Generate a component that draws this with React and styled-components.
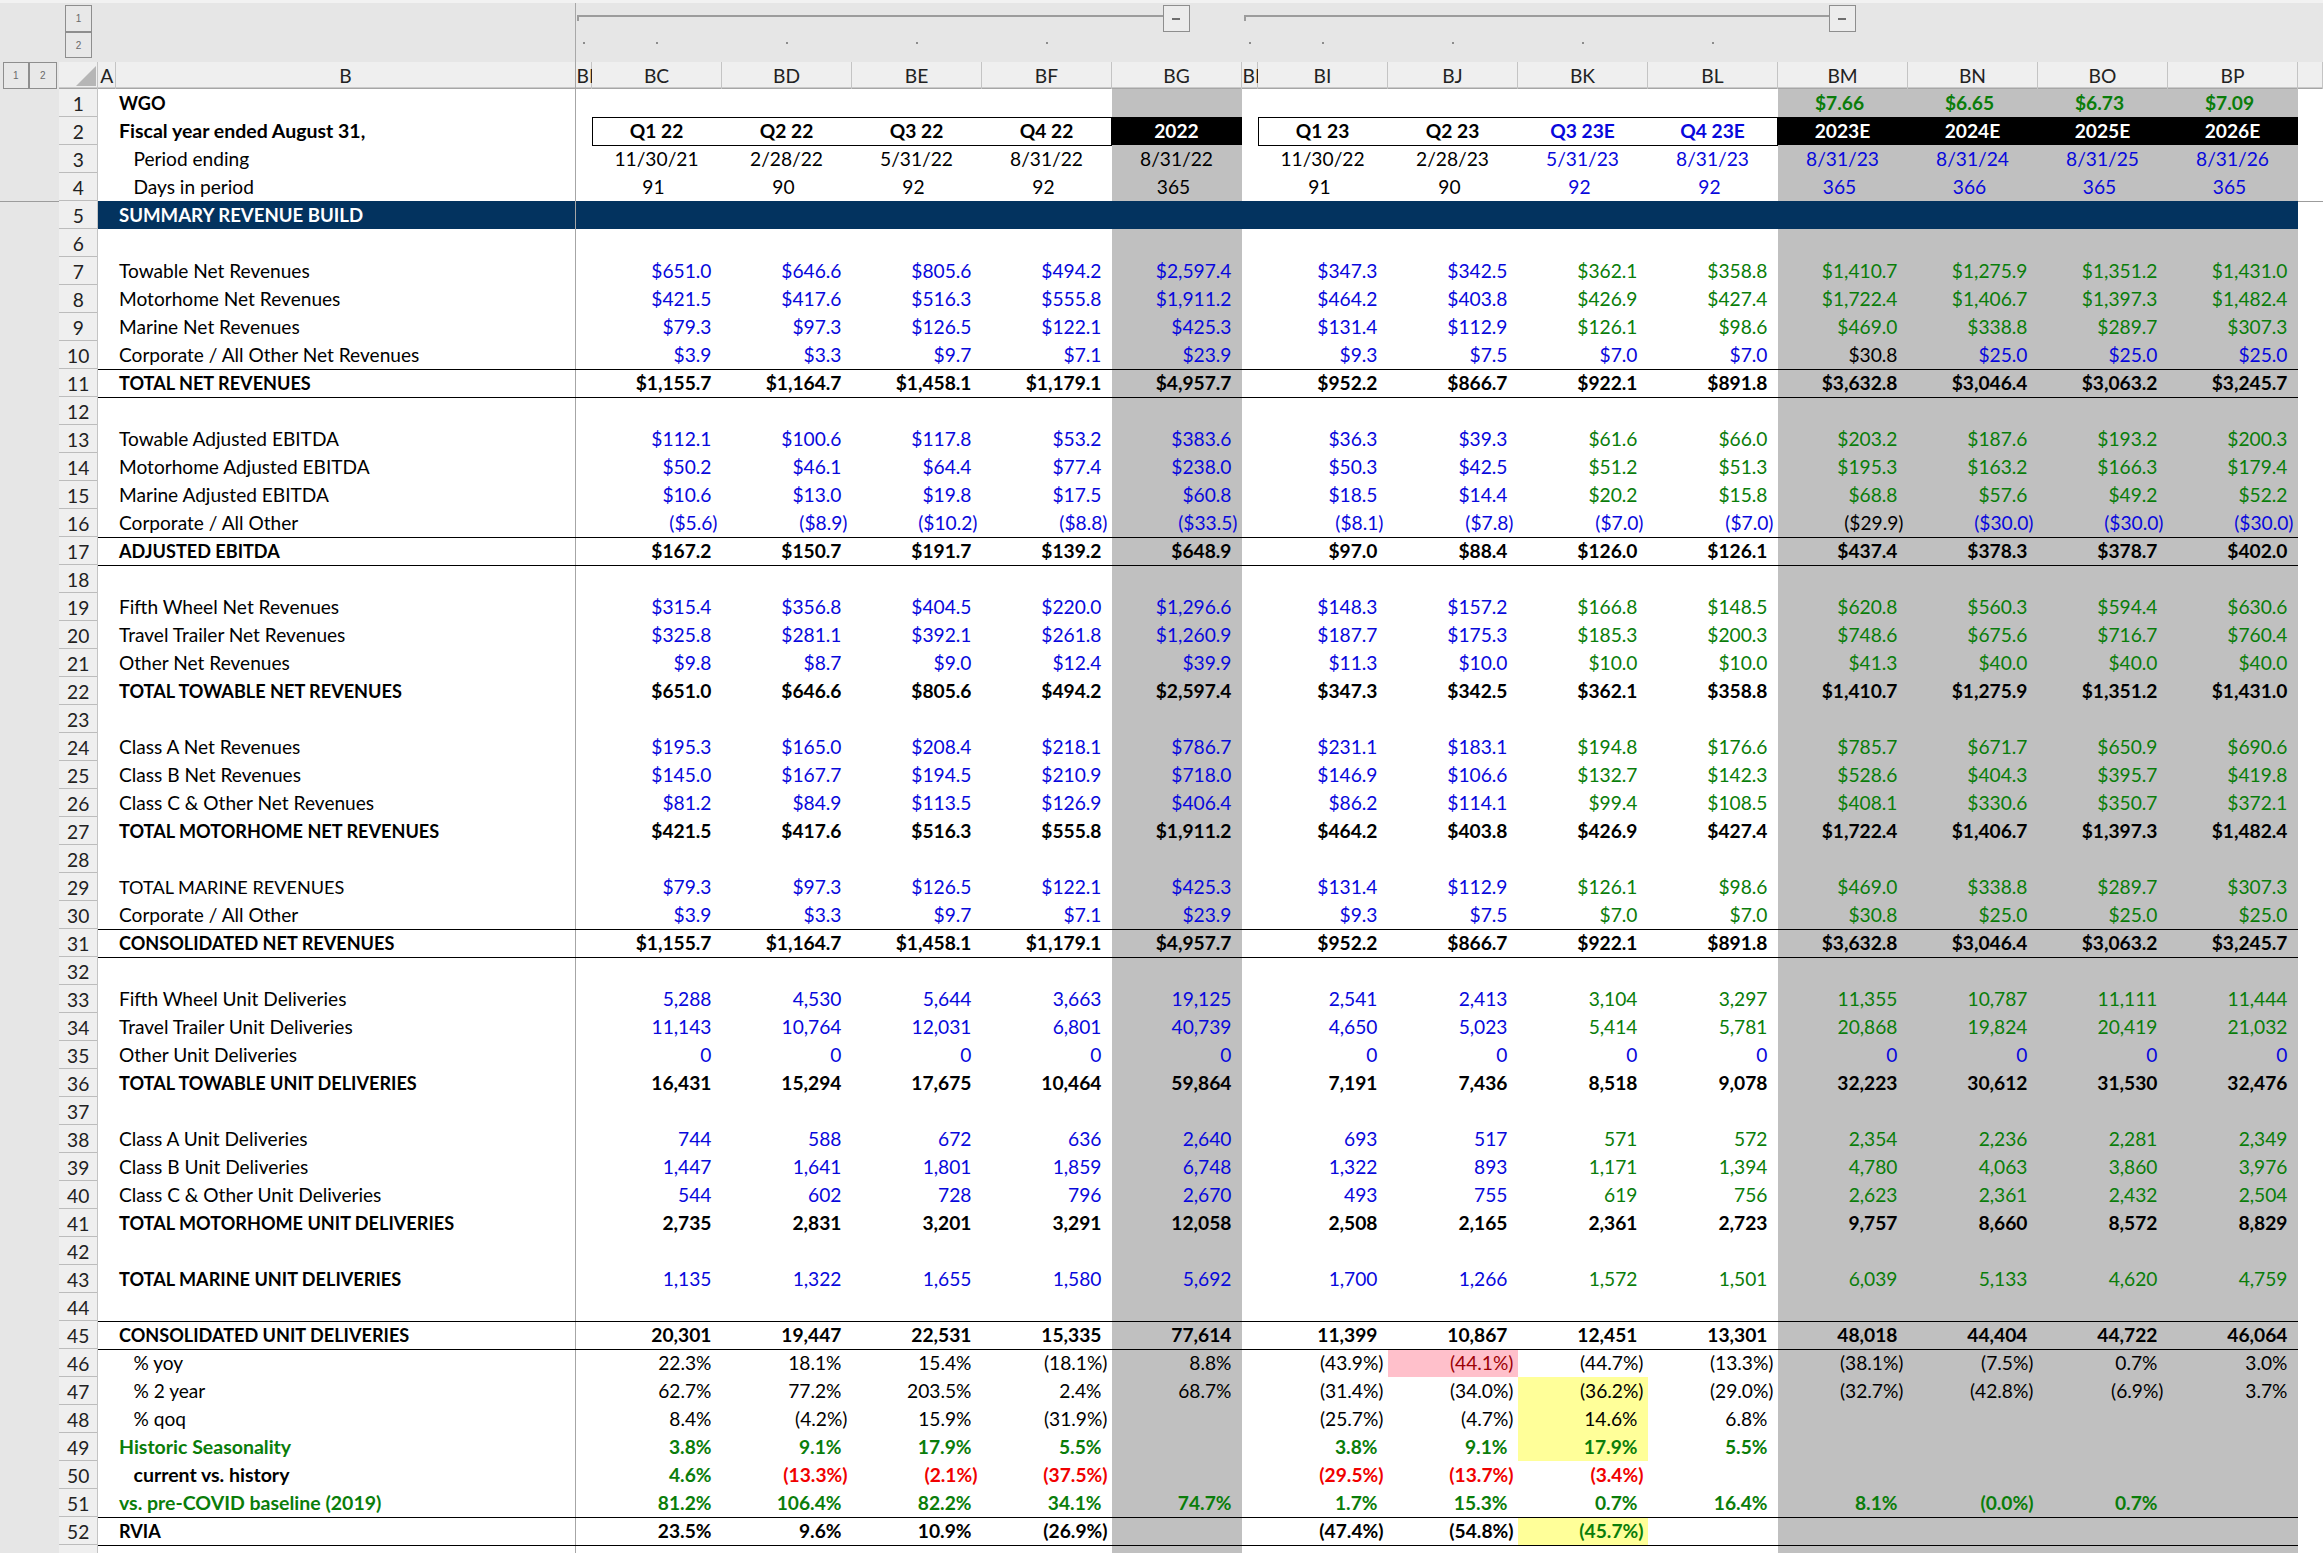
import React from 'react';
import styled, {createGlobalStyle, css} from 'styled-components';

const COLUMNS = '58.5px 39.5px 17.5px 460px 16px repeat(5, 130px) 16px repeat(8, 130px) 25.5px';
const GRAY_COLS = [4, 9, 10, 11, 12];

const INK = {
  k: '#000000',
  b: '#0808dc',
  g: '#0a7d0a',
  r: '#f00000',
  d: '#9c0006',
  w: '#ffffff'
};

const TONES = {
  gray: '#c0c0c0',
  black: '#000000',
  navy: '#03335f',
  pink: '#ffc0cb',
  yellow: '#ffff99'
};

const GlobalStyle = createGlobalStyle`
  html, body {
    margin: 0;
    padding: 0;
    background: #ffffff;
  }
`;

const Sheet = styled.div`
  width: 2323px;
  height: 1553px;
  overflow: hidden;
  background: #ffffff;
  font-family: Lato, "Liberation Sans", sans-serif;
  font-size: 19.2px;
  color: #000;
`;

const TopStrip = styled.div`
  height: 3px;
  background: #f2f2f2;
`;

const OutlineLevel = styled.div`
  display: grid;
  grid-template-columns: ${COLUMNS};
  height: ${props => props.$height}px;
  background: #e6e6e6;
`;

const OutlineSpacer = styled.div`
  grid-column: 1 / span 1;
`;

const OutlineBtnCell = styled.div`
  grid-column: 2 / span 3;
  box-shadow: inset -1px 0 0 #a8a8a8;
  padding: ${props => props.$top}px 0 0 6.5px;
`;

const LevelButton = styled.div`
  box-sizing: border-box;
  display: flex;
  align-items: center;
  justify-content: center;
  width: ${props => props.$w || 27}px;
  height: ${props => props.$h}px;
  border: 1px solid #8e8e8e;
  background: #e8e8e8;
  font-family: "Liberation Sans", sans-serif;
  font-size: 10px;
  color: #6a6a6a;
`;

const OutlineGroup = styled.div`
  grid-column: ${props => props.$col} / span 6;
  display: flex;
  align-items: flex-start;
  padding-left: ${props => props.$inset}px;
  padding-right: 52px;
`;

const GroupLine = styled.div`
  flex: 1;
  box-sizing: border-box;
  height: 6px;
  margin-top: 12px;
  border-top: 2px solid #9c9c9c;
  border-left: 2px solid #9c9c9c;
`;

const CollapseButton = styled.div`
  box-sizing: border-box;
  display: flex;
  align-items: center;
  justify-content: center;
  width: 26.5px;
  height: 27px;
  margin-top: 2px;
  border: 1px solid #8e8e8e;
  background: #ececec;
`;

const Minus = styled.span`
  width: 8px;
  height: 2px;
  background: #6e6e6e;
`;

const DotCell = styled.div`
  grid-column: ${props => props.$col};
  display: flex;
  justify-content: center;
  padding-top: 10px;
`;

const Dot = styled.span`
  width: 2px;
  height: 2px;
  background: #8c8c8c;
`;

const ColHeaderRow = styled.div`
  display: grid;
  grid-template-columns: ${COLUMNS};
  height: 27px;
  background: #efefef;
  box-shadow: inset 0 -1.5px 0 #a6a6a6;
`;

const ColMargin = styled.div`
  display: flex;
  align-items: stretch;
  padding-left: 2.5px;
  background: #e6e6e6;
`;

const Corner = styled.div`
  display: flex;
  align-items: flex-end;
  justify-content: flex-end;
  padding: 0 2.5px 3px 0;
  box-shadow: inset -1px 0 0 #c4c4c4;
`;

const ColLabel = styled.div`
  display: flex;
  align-items: center;
  justify-content: ${props => props.$clip ? 'flex-start' : 'center'};
  overflow: hidden;
  white-space: nowrap;
  padding-left: ${props => props.$clip ? '1px' : '0'};
  color: #222;
  box-shadow: inset -1px 0 0 ${props => props.$freeze ? '#a6a6a6' : '#c4c4c4'};
`;

const RowLine = styled.div`
  display: grid;
  grid-template-columns: ${COLUMNS};
  height: 28px;
`;

const MarginCell = styled.div`
  background: #e6e6e6;
  ${props => props.$freeze && css`box-shadow: inset 0 1px 0 #9c9c9c;`}
`;

const TailCell = styled.div`
  ${props => props.$freeze && css`box-shadow: inset 0 1px 0 #9c9c9c;`}
`;

const RowNumber = styled.div`
  display: flex;
  align-items: center;
  justify-content: center;
  background: #efefef;
  color: #222;
  box-shadow: inset -1px 0 0 #c4c4c4, inset 0 -1px 0 #bcbcbc;
`;

const Cell = styled.div`
  box-sizing: border-box;
  display: flex;
  align-items: flex-end;
  justify-content: ${props => props.$center ? 'center' : 'flex-end'};
  padding: 0 ${props => props.$pad}px 3px 0;
  line-height: 22px;
  white-space: nowrap;
  color: ${props => INK[props.$ink] || '#000'};
  font-weight: ${props => props.$bold ? 700 : 400};
  background: ${props => TONES[props.$tone] || 'transparent'};
  ${props => props.$rule && css`box-shadow: inset 0 1px 0 #000;`}
`;

const LabelCell = styled.div`
  display: flex;
  align-items: flex-end;
  padding: 0 0 3px ${props => props.$indent ? 18 : 3.5}px;
  line-height: 22px;
  white-space: nowrap;
  font-size: ${props => props.$size}px;
  color: ${props => INK[props.$ink] || '#000'};
  font-weight: ${props => props.$bold ? 700 : 400};
  background: ${props => TONES[props.$tone] || 'transparent'};
  box-shadow: ${props => props.$rule ? 'inset 0 1px 0 #000,' : ''} inset -1px 0 0 #a6a6a6;
`;

const FillCell = styled.div`
  background: ${props => TONES[props.$tone] || 'transparent'};
  ${props => props.$rule && css`box-shadow: inset 0 1px 0 #000;`}
`;

const QuarterBox = styled.div`
  grid-column: span 4;
  display: grid;
  grid-template-columns: repeat(4, 130px);
  box-shadow: inset 0 1px 0 #000, 0 1px 0 #000, inset 1px 0 0 #000, inset -1px 0 0 #000;
`;

const HeadLabel = styled(Cell)`
  justify-content: center;
  padding-right: 0;
  font-weight: 700;
`;

const COL_NAMES_A = ['BC', 'BD', 'BE', 'BF', 'BG'];
const COL_NAMES_B = ['BI', 'BJ', 'BK', 'BL', 'BM', 'BN', 'BO', 'BP'];

const INPUT = 'bbbbbbbgggggg';
const ALL_INPUT = 'bbbbbbbbbbbbb';
const KKK = 'kkkkkkkkkkkkk';
const GGG = 'ggggggggggggg';

// row number, label, options, values
const ROWS = [
  {n: 1, label: 'WGO', bold: true, center: true, pad: 6,
    values: '- - - - - - - - - $7.66 $6.65 $6.73 $7.09', ink: GGG},
  {n: 2, label: 'Fiscal year ended August 31,', bold: true, head: true},
  {n: 3, label: 'Period ending', indent: true, center: true, pad: 0,
    values: '11/30/21 2/28/22 5/31/22 8/31/22 8/31/22 11/30/22 2/28/23 5/31/23 8/31/23 8/31/23 8/31/24 8/31/25 8/31/26', ink: 'kkkkkkkbbbbbb'},
  {n: 4, label: 'Days in period', indent: true, center: true, pad: 6,
    values: '91 90 92 92 365 91 90 92 92 365 366 365 365', ink: 'kkkkkkkbbbbbb'},
  {n: 5, label: 'SUMMARY REVENUE BUILD', bold: true, navy: true},
  {n: 6},
  {n: 7, label: 'Towable Net Revenues', values: '$651.0 $646.6 $805.6 $494.2 $2,597.4 $347.3 $342.5 $362.1 $358.8 $1,410.7 $1,275.9 $1,351.2 $1,431.0', ink: INPUT},
  {n: 8, label: 'Motorhome Net Revenues', values: '$421.5 $417.6 $516.3 $555.8 $1,911.2 $464.2 $403.8 $426.9 $427.4 $1,722.4 $1,406.7 $1,397.3 $1,482.4', ink: INPUT},
  {n: 9, label: 'Marine Net Revenues', values: '$79.3 $97.3 $126.5 $122.1 $425.3 $131.4 $112.9 $126.1 $98.6 $469.0 $338.8 $289.7 $307.3', ink: INPUT},
  {n: 10, label: 'Corporate / All Other Net Revenues', values: '$3.9 $3.3 $9.7 $7.1 $23.9 $9.3 $7.5 $7.0 $7.0 $30.8 $25.0 $25.0 $25.0', ink: 'bbbbbbbbbkbbb'},
  {n: 11, label: 'TOTAL NET REVENUES', bold: true, rule: true, values: '$1,155.7 $1,164.7 $1,458.1 $1,179.1 $4,957.7 $952.2 $866.7 $922.1 $891.8 $3,632.8 $3,046.4 $3,063.2 $3,245.7', ink: KKK},
  {n: 12, rule: true},
  {n: 13, label: 'Towable Adjusted EBITDA', values: '$112.1 $100.6 $117.8 $53.2 $383.6 $36.3 $39.3 $61.6 $66.0 $203.2 $187.6 $193.2 $200.3', ink: INPUT},
  {n: 14, label: 'Motorhome Adjusted EBITDA', values: '$50.2 $46.1 $64.4 $77.4 $238.0 $50.3 $42.5 $51.2 $51.3 $195.3 $163.2 $166.3 $179.4', ink: INPUT},
  {n: 15, label: 'Marine Adjusted EBITDA', values: '$10.6 $13.0 $19.8 $17.5 $60.8 $18.5 $14.4 $20.2 $15.8 $68.8 $57.6 $49.2 $52.2', ink: INPUT},
  {n: 16, label: 'Corporate / All Other', values: '($5.6) ($8.9) ($10.2) ($8.8) ($33.5) ($8.1) ($7.8) ($7.0) ($7.0) ($29.9) ($30.0) ($30.0) ($30.0)', ink: 'bbbbbbbbbkbbb'},
  {n: 17, label: 'ADJUSTED EBITDA', bold: true, rule: true, values: '$167.2 $150.7 $191.7 $139.2 $648.9 $97.0 $88.4 $126.0 $126.1 $437.4 $378.3 $378.7 $402.0', ink: KKK},
  {n: 18, rule: true},
  {n: 19, label: 'Fifth Wheel Net Revenues', values: '$315.4 $356.8 $404.5 $220.0 $1,296.6 $148.3 $157.2 $166.8 $148.5 $620.8 $560.3 $594.4 $630.6', ink: INPUT},
  {n: 20, label: 'Travel Trailer Net Revenues', values: '$325.8 $281.1 $392.1 $261.8 $1,260.9 $187.7 $175.3 $185.3 $200.3 $748.6 $675.6 $716.7 $760.4', ink: INPUT},
  {n: 21, label: 'Other Net Revenues', values: '$9.8 $8.7 $9.0 $12.4 $39.9 $11.3 $10.0 $10.0 $10.0 $41.3 $40.0 $40.0 $40.0', ink: INPUT},
  {n: 22, label: 'TOTAL TOWABLE NET REVENUES', bold: true, values: '$651.0 $646.6 $805.6 $494.2 $2,597.4 $347.3 $342.5 $362.1 $358.8 $1,410.7 $1,275.9 $1,351.2 $1,431.0', ink: KKK},
  {n: 23},
  {n: 24, label: 'Class A Net Revenues', values: '$195.3 $165.0 $208.4 $218.1 $786.7 $231.1 $183.1 $194.8 $176.6 $785.7 $671.7 $650.9 $690.6', ink: INPUT},
  {n: 25, label: 'Class B Net Revenues', values: '$145.0 $167.7 $194.5 $210.9 $718.0 $146.9 $106.6 $132.7 $142.3 $528.6 $404.3 $395.7 $419.8', ink: INPUT},
  {n: 26, label: 'Class C & Other Net Revenues', values: '$81.2 $84.9 $113.5 $126.9 $406.4 $86.2 $114.1 $99.4 $108.5 $408.1 $330.6 $350.7 $372.1', ink: INPUT},
  {n: 27, label: 'TOTAL MOTORHOME NET REVENUES', bold: true, values: '$421.5 $417.6 $516.3 $555.8 $1,911.2 $464.2 $403.8 $426.9 $427.4 $1,722.4 $1,406.7 $1,397.3 $1,482.4', ink: KKK},
  {n: 28},
  {n: 29, label: 'TOTAL MARINE REVENUES', values: '$79.3 $97.3 $126.5 $122.1 $425.3 $131.4 $112.9 $126.1 $98.6 $469.0 $338.8 $289.7 $307.3', ink: INPUT},
  {n: 30, label: 'Corporate / All Other', values: '$3.9 $3.3 $9.7 $7.1 $23.9 $9.3 $7.5 $7.0 $7.0 $30.8 $25.0 $25.0 $25.0', ink: INPUT},
  {n: 31, label: 'CONSOLIDATED NET REVENUES', bold: true, rule: true, values: '$1,155.7 $1,164.7 $1,458.1 $1,179.1 $4,957.7 $952.2 $866.7 $922.1 $891.8 $3,632.8 $3,046.4 $3,063.2 $3,245.7', ink: KKK},
  {n: 32, rule: true},
  {n: 33, label: 'Fifth Wheel Unit Deliveries', values: '5,288 4,530 5,644 3,663 19,125 2,541 2,413 3,104 3,297 11,355 10,787 11,111 11,444', ink: INPUT},
  {n: 34, label: 'Travel Trailer Unit Deliveries', values: '11,143 10,764 12,031 6,801 40,739 4,650 5,023 5,414 5,781 20,868 19,824 20,419 21,032', ink: INPUT},
  {n: 35, label: 'Other Unit Deliveries', values: '0 0 0 0 0 0 0 0 0 0 0 0 0', ink: ALL_INPUT},
  {n: 36, label: 'TOTAL TOWABLE UNIT DELIVERIES', bold: true, values: '16,431 15,294 17,675 10,464 59,864 7,191 7,436 8,518 9,078 32,223 30,612 31,530 32,476', ink: KKK},
  {n: 37},
  {n: 38, label: 'Class A Unit Deliveries', values: '744 588 672 636 2,640 693 517 571 572 2,354 2,236 2,281 2,349', ink: INPUT},
  {n: 39, label: 'Class B Unit Deliveries', values: '1,447 1,641 1,801 1,859 6,748 1,322 893 1,171 1,394 4,780 4,063 3,860 3,976', ink: INPUT},
  {n: 40, label: 'Class C & Other Unit Deliveries', values: '544 602 728 796 2,670 493 755 619 756 2,623 2,361 2,432 2,504', ink: INPUT},
  {n: 41, label: 'TOTAL MOTORHOME UNIT DELIVERIES', bold: true, values: '2,735 2,831 3,201 3,291 12,058 2,508 2,165 2,361 2,723 9,757 8,660 8,572 8,829', ink: KKK},
  {n: 42},
  {n: 43, label: 'TOTAL MARINE UNIT DELIVERIES', bold: true, values: '1,135 1,322 1,655 1,580 5,692 1,700 1,266 1,572 1,501 6,039 5,133 4,620 4,759', ink: INPUT, boldLabelOnly: true},
  {n: 44},
  {n: 45, label: 'CONSOLIDATED UNIT DELIVERIES', bold: true, rule: true, values: '20,301 19,447 22,531 15,335 77,614 11,399 10,867 12,451 13,301 48,018 44,404 44,722 46,064', ink: KKK},
  {n: 46, label: '% yoy', indent: true, rule: true, values: '22.3% 18.1% 15.4% (18.1%) 8.8% (43.9%) (44.1%) (44.7%) (13.3%) (38.1%) (7.5%) 0.7% 3.0%', ink: 'kkkkkkdkkkkkk', tones: {6: 'pink'}},
  {n: 47, label: '% 2 year', indent: true, values: '62.7% 77.2% 203.5% 2.4% 68.7% (31.4%) (34.0%) (36.2%) (29.0%) (32.7%) (42.8%) (6.9%) 3.7%', ink: KKK, tones: {7: 'yellow'}},
  {n: 48, label: '% qoq', indent: true, values: '8.4% (4.2%) 15.9% (31.9%) - (25.7%) (4.7%) 14.6% 6.8% - - - -', ink: KKK, tones: {7: 'yellow'}},
  {n: 49, label: 'Historic Seasonality', labelInk: 'g', bold: true, values: '3.8% 9.1% 17.9% 5.5% - 3.8% 9.1% 17.9% 5.5% - - - -', ink: GGG, tones: {7: 'yellow'}},
  {n: 50, label: 'current vs. history', indent: true, bold: true, values: '4.6% (13.3%) (2.1%) (37.5%) - (29.5%) (13.7%) (3.4%) - - - - -', ink: 'grrrrrrrrrrrr'},
  {n: 51, label: 'vs. pre-COVID baseline (2019)', labelInk: 'g', bold: true, values: '81.2% 106.4% 82.2% 34.1% 74.7% 1.7% 15.3% 0.7% 16.4% 8.1% (0.0%) 0.7% -', ink: GGG},
  {n: 52, label: 'RVIA', bold: true, rule: true, values: '23.5% 9.6% 10.9% (26.9%) - (47.4%) (54.8%) (45.7%) - - - - -', ink: 'kkkkkkkgkkkkk', tones: {7: 'yellow'}},
  {n: 53, rule: true, noNumber: true}
];

// Lato's capitals run wider than the sheet's, its lower case narrower
const labelSize = row => {
  if (!row.label) return 19.1;
  if (row.navy) return 18.6;
  if (row.label === row.label.toUpperCase()) return 18.1;
  return row.bold ? 19.5 : 19.1;
};

const toneFor = (row, i) => {
  if (row.navy) return 'navy';
  if (row.tones && row.tones[i]) return row.tones[i];
  return GRAY_COLS.includes(i) ? 'gray' : undefined;
};

const ValueCell = ({row, i, values}) => {
  const text = values[i] && values[i] !== '-' ? values[i] : '';
  const closes = text.endsWith(')');
  const pad = row.center ? row.pad : (closes ? 4 : 10);
  return (
    <Cell
      $center={row.center}
      $pad={pad}
      $tone={toneFor(row, i)}
      $ink={row.ink ? row.ink[i] : 'k'}
      $bold={row.bold && !row.boldLabelOnly}
      $rule={row.rule}
    >
      {text}
    </Cell>
  );
};

const SheetRow = ({row}) => {
  const values = row.values ? row.values.split(' ') : [];
  const tone = row.navy ? 'navy' : undefined;
  const inkFor = row.navy ? 'w' : row.labelInk;
  return (
    <RowLine>
      <MarginCell $freeze={row.navy} />
      <RowNumber>{row.noNumber ? '' : row.n}</RowNumber>
      <FillCell $tone={tone} $rule={row.rule} />
      <LabelCell
        $indent={row.indent}
        $bold={row.bold}
        $ink={inkFor}
        $tone={tone}
        $rule={row.rule}
        $size={labelSize(row)}
      >
        {row.label}
      </LabelCell>
      <FillCell $tone={tone} $rule={row.rule} />
      {[0, 1, 2, 3, 4].map(i => <ValueCell key={i} row={row} i={i} values={values} />)}
      <FillCell $tone={tone} $rule={row.rule} />
      {[5, 6, 7, 8, 9, 10, 11, 12].map(i => <ValueCell key={i} row={row} i={i} values={values} />)}
      <TailCell $freeze={row.navy} />
    </RowLine>
  );
};

const YearCell = ({text}) =>
  <HeadLabel $tone="black" $ink="w" $pad={0}>{text}</HeadLabel>

const HeaderRow = ({row}) =>
  <RowLine>
    <MarginCell />
    <RowNumber>{row.n}</RowNumber>
    <FillCell />
    <LabelCell $bold $size={labelSize(row)}>{row.label}</LabelCell>
    <FillCell />
    <QuarterBox>
      <HeadLabel $pad={0}>Q1 22</HeadLabel>
      <HeadLabel $pad={0}>Q2 22</HeadLabel>
      <HeadLabel $pad={0}>Q3 22</HeadLabel>
      <HeadLabel $pad={0}>Q4 22</HeadLabel>
    </QuarterBox>
    <YearCell text="2022" />
    <FillCell />
    <QuarterBox>
      <HeadLabel $pad={0}>Q1 23</HeadLabel>
      <HeadLabel $pad={0}>Q2 23</HeadLabel>
      <HeadLabel $pad={0} $ink="b">Q3 23E</HeadLabel>
      <HeadLabel $pad={0} $ink="b">Q4 23E</HeadLabel>
    </QuarterBox>
    <YearCell text="2023E" />
    <YearCell text="2024E" />
    <YearCell text="2025E" />
    <YearCell text="2026E" />
    <TailCell />
  </RowLine>

const OutlineBar = () =>
  <>
    <TopStrip />
    <OutlineLevel $height={29}>
      <OutlineSpacer />
      <OutlineBtnCell $top={2}>
        <LevelButton $h={27}>1</LevelButton>
      </OutlineBtnCell>
      <OutlineGroup $col={5} $inset={1}>
        <GroupLine />
        <CollapseButton><Minus /></CollapseButton>
      </OutlineGroup>
      <OutlineGroup $col={11} $inset={2}>
        <GroupLine />
        <CollapseButton><Minus /></CollapseButton>
      </OutlineGroup>
    </OutlineLevel>
    <OutlineLevel $height={30}>
      <OutlineSpacer />
      <OutlineBtnCell $top={0}>
        <LevelButton $h={26}>2</LevelButton>
      </OutlineBtnCell>
      {[5, 6, 7, 8, 9, 11, 12, 13, 14, 15].map(col =>
        <DotCell key={col} $col={col}><Dot /></DotCell>
      )}
    </OutlineLevel>
  </>

const ColumnHeader = () =>
  <ColHeaderRow>
    <ColMargin>
      <LevelButton $h={27} $w={26.5}>1</LevelButton>
      <LevelButton $h={27} $w={27.5}>2</LevelButton>
    </ColMargin>
    <Corner>
      <svg width="20" height="20" viewBox="0 0 20 20">
        <polygon points="20,0 20,20 0,20" fill="#b6b6b6" />
      </svg>
    </Corner>
    <ColLabel>A</ColLabel>
    <ColLabel $freeze>B</ColLabel>
    <ColLabel $clip>BB</ColLabel>
    {COL_NAMES_A.map(name => <ColLabel key={name}>{name}</ColLabel>)}
    <ColLabel $clip>BH</ColLabel>
    {COL_NAMES_B.map(name => <ColLabel key={name}>{name}</ColLabel>)}
    <ColLabel />
  </ColHeaderRow>

export default function App() {
  return (
    <Sheet>
      <GlobalStyle />
      <OutlineBar />
      <ColumnHeader />
      {ROWS.map(row =>
        row.head ? <HeaderRow key={row.n} row={row} /> : <SheetRow key={row.n} row={row} />
      )}
    </Sheet>
  );
}
